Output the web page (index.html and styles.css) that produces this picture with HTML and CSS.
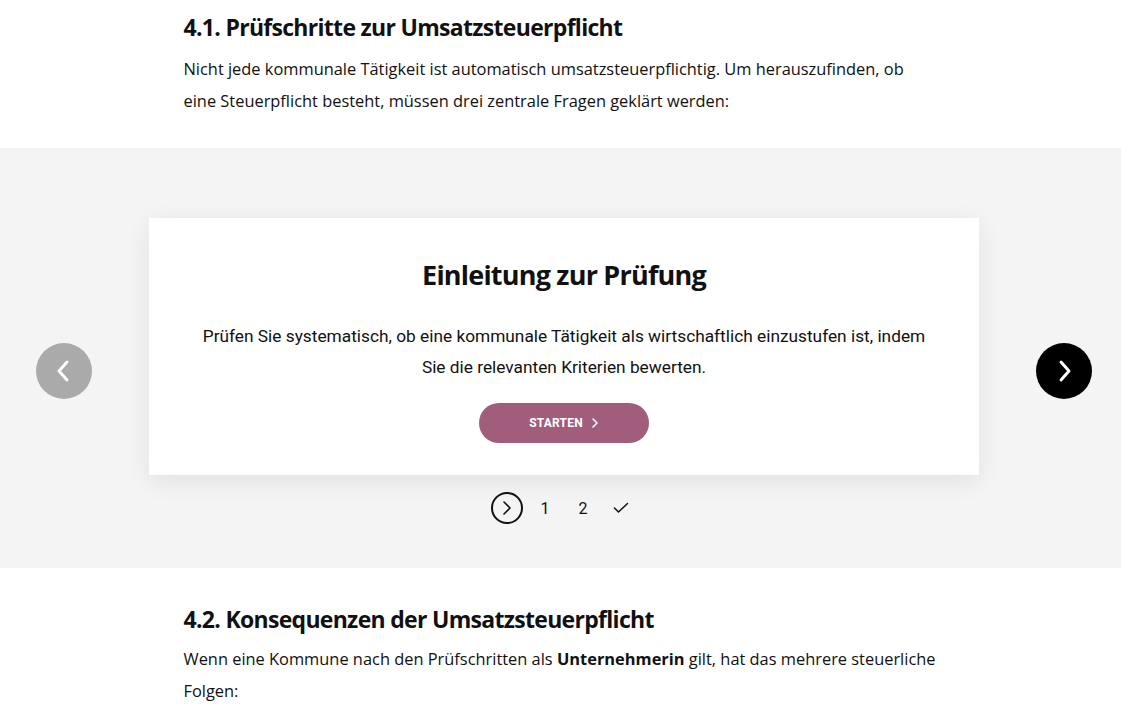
FILE: index.html
```html
<!DOCTYPE html>
<html lang="de">
<head>
<meta charset="utf-8">
<title>Umsatzsteuerpflicht</title>
<link rel="stylesheet" href="styles.css">
</head>
<body>
<section class="text-block first">
  <h2 class="heading">4.1. Prüfschritte zur Umsatzsteuerpflicht</h2>
  <p class="para">Nicht jede kommunale Tätigkeit ist automatisch umsatzsteuerpflichtig. Um herauszufinden, ob eine Steuerpflicht besteht, müssen drei zentrale Fragen geklärt werden:</p>
</section>

<section class="slider-band">
  <div class="slider">
    <button class="nav-btn prev" aria-label="Zurück">
      <svg width="20" height="28" viewBox="0 0 20 28"><path d="M13 5 L5 14 L13 23" fill="none" stroke="#fff" stroke-width="3" stroke-linecap="round" stroke-linejoin="round"/></svg>
    </button>
    <div class="stage">
      <div class="card">
        <h3 class="card-title">Einleitung zur Prüfung</h3>
        <p class="card-text">Prüfen Sie systematisch, ob eine kommunale Tätigkeit als wirtschaftlich einzustufen ist, indem Sie die relevanten Kriterien bewerten.</p>
        <button class="start-btn">STARTEN
          <svg width="8" height="12" viewBox="0 0 8 12"><path d="M2 2 L6 6 L2 10" fill="none" stroke="#fff" stroke-width="1.5" stroke-linecap="round" stroke-linejoin="round"/></svg>
        </button>
      </div>
      <div class="steps">
        <span class="step current">
          <svg width="14" height="16" viewBox="0 0 14 16"><path d="M4 2 L10 8 L4 14" fill="none" stroke="#111" stroke-width="1.6" stroke-linecap="round" stroke-linejoin="round"/></svg>
        </span>
        <span class="step">1</span>
        <span class="step">2</span>
        <span class="step">
          <svg width="16" height="12" viewBox="0 0 16 12"><path d="M1.5 6 L5.5 10 L14.5 1.5" fill="none" stroke="#111" stroke-width="1.5" stroke-linecap="round" stroke-linejoin="round"/></svg>
        </span>
      </div>
    </div>
    <button class="nav-btn next" aria-label="Weiter">
      <svg width="20" height="28" viewBox="0 0 20 28"><path d="M7 5 L15 14 L7 23" fill="none" stroke="#fff" stroke-width="3" stroke-linecap="round" stroke-linejoin="round"/></svg>
    </button>
  </div>
</section>

<section class="text-block second">
  <h2 class="heading">4.2. Konsequenzen der Umsatzsteuerpflicht</h2>
  <p class="para">Wenn eine Kommune nach den Prüfschritten als <strong>Unternehmerin</strong> gilt, hat das mehrere steuerliche Folgen:</p>
</section>
</body>
</html>
```
FILE: styles.css
```css
* { box-sizing: border-box; }
body {
  margin: 0;
  background: #fff;
  color: #111;
  font-family: "Open Sans", "Noto Sans", sans-serif;
}
.text-block {
  width: 754px;
  margin: 0 auto;
}
.text-block.first { padding: 13px 0 31px; }
.text-block.second { padding: 37px 0 20px; }
.heading {
  margin: 0 0 9px;
  font-size: 23px;
  line-height: 29px;
  font-weight: 700;
  letter-spacing: -0.7px;
}
.first .heading { margin-bottom: 11px; }
.para {
  margin: 0;
  font-size: 16.4px;
  line-height: 32px;
}
.para strong { font-weight: 700; }

.slider-band {
  background: #f4f4f4;
  padding: 70px 0 44px;
}
.slider {
  width: 1056px;
  margin-left: 36px;
  display: flex;
  align-items: center;
  justify-content: space-between;
}
.nav-btn {
  width: 56px;
  height: 56px;
  border-radius: 50%;
  border: none;
  padding: 0;
  display: flex;
  align-items: center;
  justify-content: center;
  cursor: pointer;
}
.nav-btn.prev { background: #aaaaaa; }
.nav-btn.next { background: #000; }
.stage {
  width: 830px;
  display: flex;
  flex-direction: column;
  align-items: center;
}
.card {
  width: 830px;
  background: #fff;
  box-shadow: 0 6px 24px rgba(0,0,0,0.08);
  padding: 40px 48px 32px;
  display: flex;
  flex-direction: column;
  align-items: center;
  text-align: center;
}
.card-title {
  margin: 0 0 29px;
  font-size: 27px;
  line-height: 34px;
  font-weight: 700;
  letter-spacing: -0.8px;
}
.card-text {
  margin: 0 0 20px;
  font-family: "Roboto", sans-serif;
  font-size: 17.3px;
  line-height: 31px;
}
.start-btn {
  width: 170px;
  height: 40px;
  border-radius: 20px;
  border: none;
  background: #a05e7c;
  color: #fff;
  font-family: "Roboto", sans-serif;
  font-weight: 700;
  font-size: 12px;
  letter-spacing: 0.2px;
  display: flex;
  align-items: center;
  justify-content: center;
  gap: 8px;
  cursor: pointer;
}
.steps {
  margin-top: 17px;
  display: flex;
  justify-content: center;
  gap: 6px;
}
.step {
  width: 32px;
  height: 32px;
  display: flex;
  align-items: center;
  justify-content: center;
  font-family: "Roboto", sans-serif;
  font-size: 16px;
  color: #111;
}
.step.current {
  border: 2px solid #111;
  border-radius: 50%;
}
```
